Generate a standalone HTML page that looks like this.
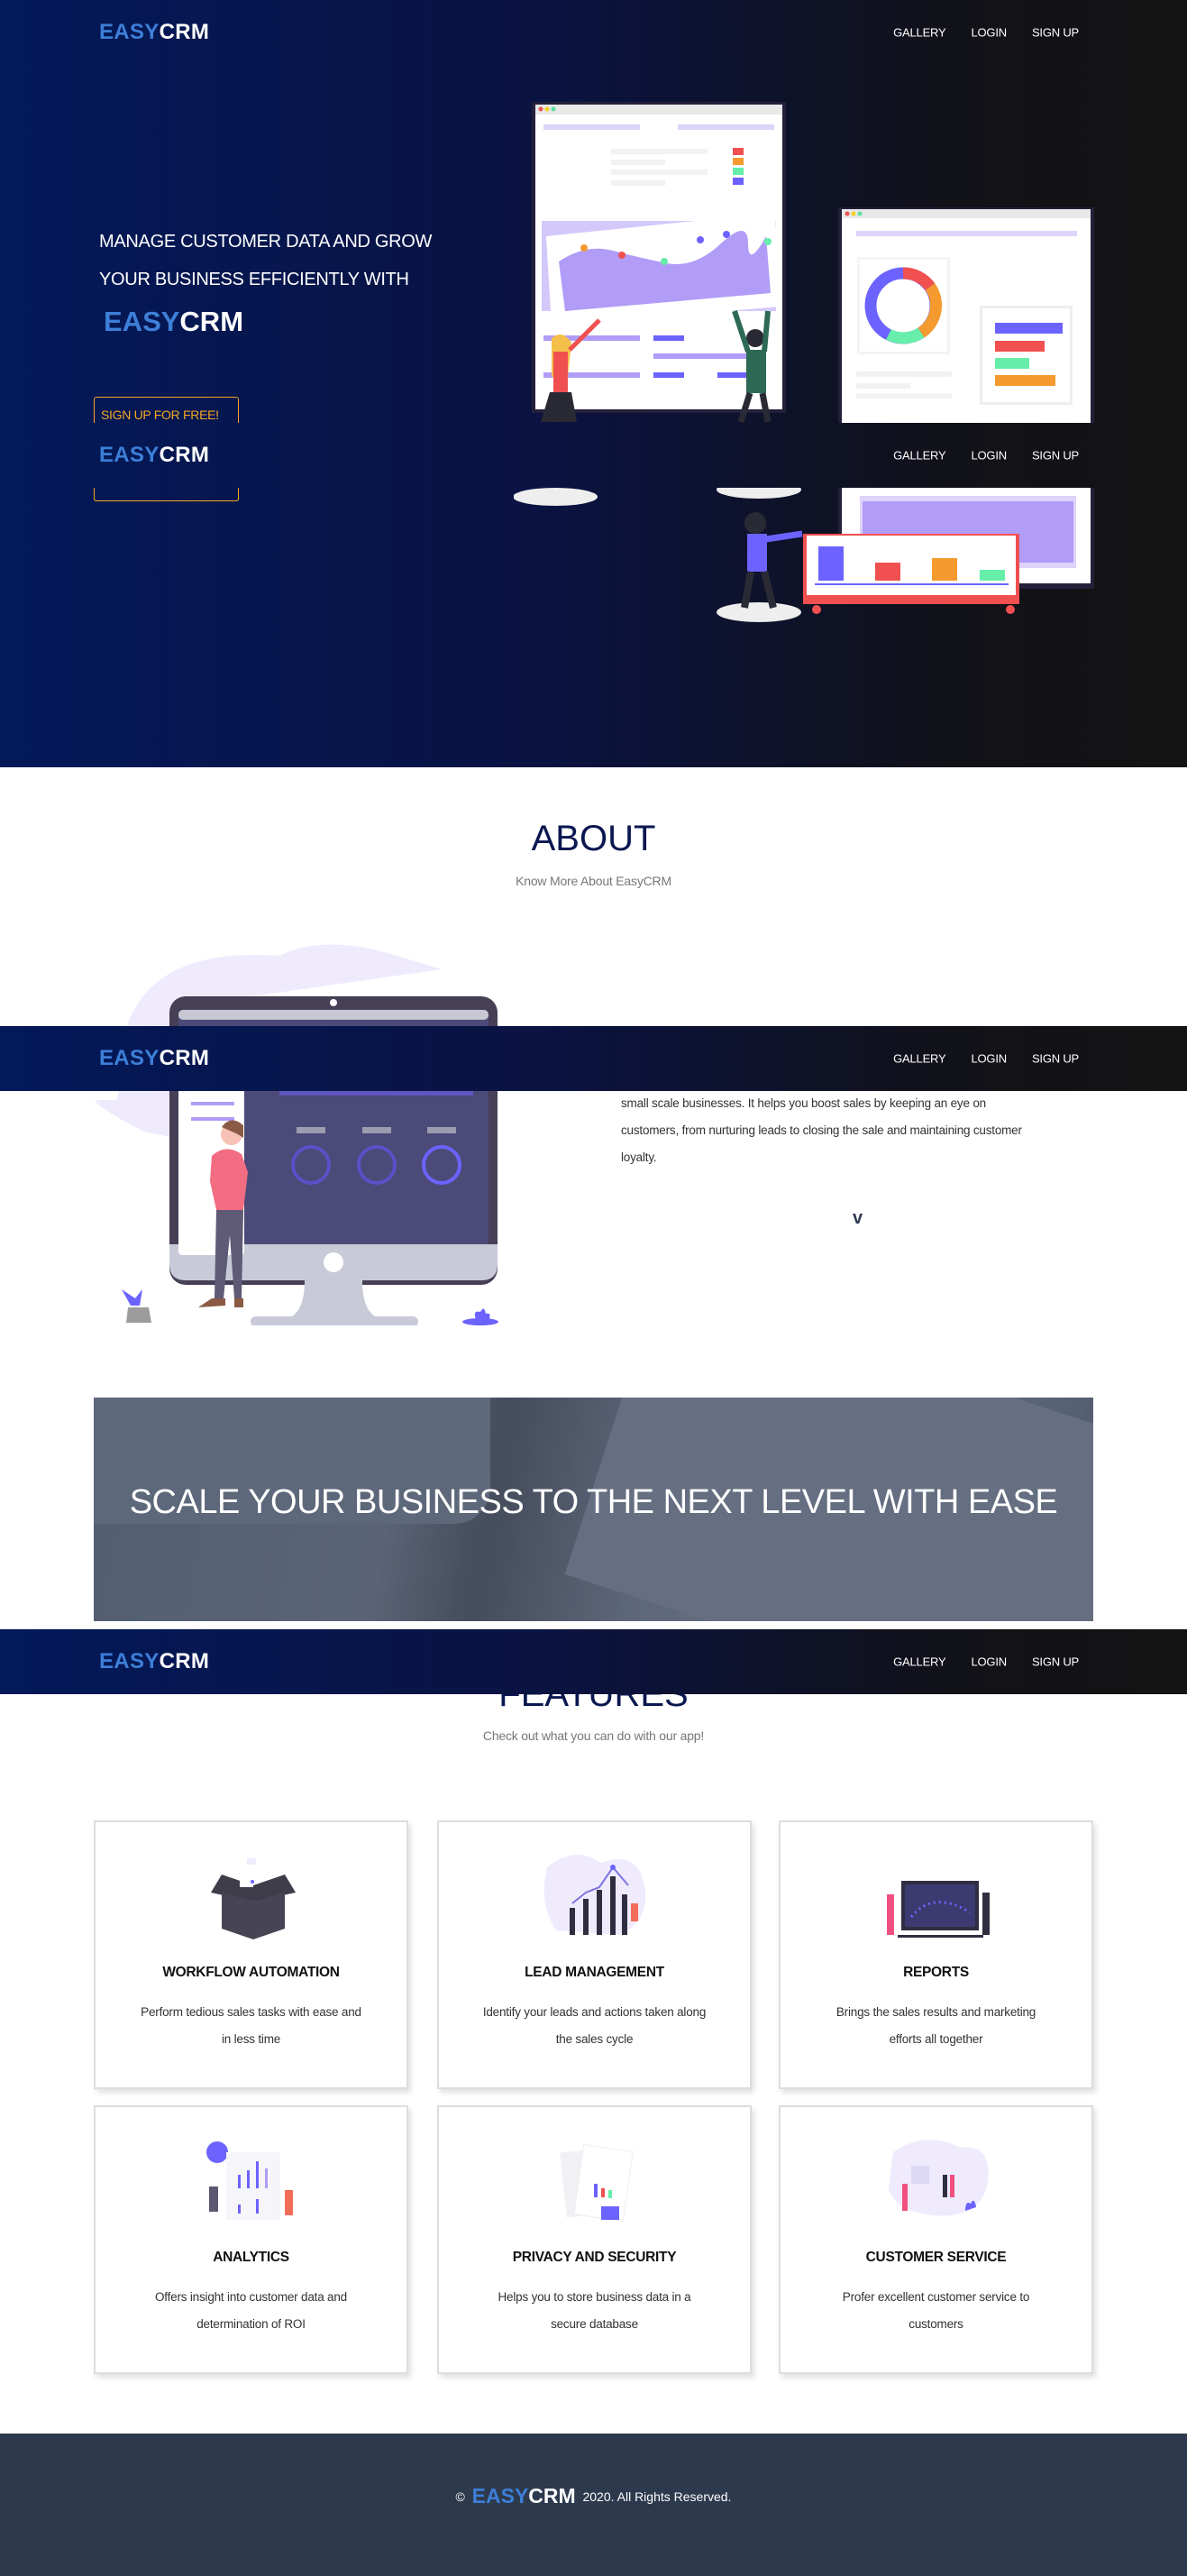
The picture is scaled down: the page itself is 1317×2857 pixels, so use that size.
<!DOCTYPE html>
<html><head><meta charset="utf-8">
<style>
*{margin:0;padding:0;box-sizing:border-box}
body{width:1317px;height:2857px;position:relative;background:#fff;font-family:"Liberation Sans",sans-serif;overflow:hidden}
.abs{position:absolute}
.grad{background:linear-gradient(to right,#03195a 0%,#0a1342 45%,#111118 80%,#141414 100%)}
.nav{position:absolute;left:0;width:1317px;height:72px}
.logo{position:absolute;left:110px;top:50%;transform:translateY(-50%);font-weight:bold;font-size:24px;color:#fff;letter-spacing:0.3px}
.logo b{color:#3d7fd8}
.links{position:absolute;right:120px;top:50%;transform:translateY(-50%);font-size:13px;color:#fff;display:flex;gap:28px;letter-spacing:-.2px}
.card{position:absolute;width:349px;height:298px;background:#fff;border:2px solid #ddd;box-shadow:3px 4px 6px rgba(0,0,0,.12);text-align:center}
.card h4{position:absolute;top:158px;width:100%;font-size:15.5px;color:#111;font-weight:bold;letter-spacing:-.3px}
.card p{position:absolute;top:196px;width:100%;font-size:13.5px;color:#333;line-height:30px;padding:0 48px;letter-spacing:-.2px}
.card svg{position:absolute;left:110px;top:30px}
</style></head><body>
<!-- HERO -->
<div class="abs grad" style="left:0;top:0;width:1317px;height:851px"></div>
<div class="nav" style="top:0"><div class="logo"><b>EASY</b>CRM</div><div class="links"><span>GALLERY</span><span>LOGIN</span><span>SIGN UP</span></div></div>
<div class="abs" style="left:110px;top:247px;color:#fff;font-size:20px;line-height:42px;letter-spacing:-.3px">MANAGE CUSTOMER DATA AND GROW<br>YOUR BUSINESS EFFICIENTLY WITH</div>
<div class="abs" style="left:115px;top:339px;font-size:31px;font-weight:bold;color:#fff"><span style="color:#3d7fd8">EASY</span>CRM</div>
<div class="abs" style="left:104px;top:440px;width:161px;height:116px;border:1px solid #f5a623;border-radius:3px"></div>
<div class="abs" style="left:112px;top:452px;color:#f5a623;font-size:14px;letter-spacing:-.3px">SIGN UP FOR FREE!</div>

<svg class="abs" style="left:570px;top:100px" width="660" height="590" viewBox="570 100 660 590">
<rect x="590" y="113" width="282" height="345" fill="#241f3a"/>
<rect x="594" y="116" width="274" height="338" fill="#fff"/>
<rect x="594" y="116" width="274" height="11" fill="#e8e8e8"/>
<circle cx="600" cy="121" r="2.5" fill="#f05050"/><circle cx="607" cy="121" r="2.5" fill="#f5d020"/><circle cx="614" cy="121" r="2.5" fill="#5ee0a0"/>
<rect x="603" y="138" width="107" height="6" fill="#ddd3fb"/><rect x="752" y="138" width="107" height="6" fill="#ddd3fb"/>
<rect x="678" y="165" width="107" height="6" fill="#f2f2f2"/><rect x="678" y="177" width="60" height="6" fill="#f2f2f2"/><rect x="678" y="188" width="107" height="6" fill="#f2f2f2"/><rect x="678" y="200" width="60" height="6" fill="#f2f2f2"/>
<rect x="813" y="164" width="12" height="8" fill="#f05050"/><rect x="813" y="175" width="12" height="8" fill="#f59a2e"/><rect x="813" y="186" width="12" height="8" fill="#66eeaa"/><rect x="813" y="197" width="12" height="8" fill="#6c63ff"/>
<rect x="601" y="245" width="260" height="100" fill="#d4c8fa"/>
<polygon points="606,262 860,236 865,340 612,362" fill="#fff"/>
<path d="M620 290 Q650 270 680 278 T740 292 T800 270 T830 270 T850 262 L855 325 L627 345 Z" fill="#b19cf7"/>
<circle cx="648" cy="275" r="4" fill="#f59a2e"/><circle cx="690" cy="283" r="4" fill="#f05050"/><circle cx="737" cy="290" r="4" fill="#66eeaa"/><circle cx="777" cy="266" r="4" fill="#6c63ff"/><circle cx="806" cy="260" r="4" fill="#6c63ff"/><circle cx="852" cy="268" r="4" fill="#66eeaa"/>
<rect x="603" y="372" width="107" height="6" fill="#b19cf7"/><rect x="725" y="372" width="34" height="6" fill="#6c63ff"/>
<rect x="725" y="392" width="107" height="6" fill="#b19cf7"/>
<rect x="603" y="413" width="107" height="6" fill="#b19cf7"/><rect x="725" y="413" width="34" height="6" fill="#6c63ff"/><rect x="796" y="413" width="34" height="6" fill="#6c63ff"/>
<path d="M612 375 q12 -10 22 5 l-4 38 l-18 0 z" fill="#f5c04a"/><rect x="614" y="390" width="16" height="45" fill="#f05050"/><polygon points="610,435 634,435 640,468 600,468" fill="#2a2a35"/>
<path d="M632 388 L665 355" stroke="#f05050" stroke-width="5"/>
<circle cx="838" cy="375" r="10" fill="#2a2a35"/><rect x="828" y="388" width="22" height="48" fill="#2d6a55"/><path d="M830 390 L815 345 M848 390 L852 345" stroke="#2d6a55" stroke-width="6"/><path d="M832 436 L822 468 M846 436 L852 468" stroke="#2a2a35" stroke-width="7"/>
<rect x="930" y="230" width="284" height="423" fill="#241f3a"/>
<rect x="934" y="232" width="276" height="415" fill="#fff"/>
<rect x="934" y="232" width="276" height="10" fill="#e8e8e8"/>
<circle cx="940" cy="237" r="2.5" fill="#f05050"/><circle cx="947" cy="237" r="2.5" fill="#f5d020"/><circle cx="954" cy="237" r="2.5" fill="#5ee0a0"/>
<rect x="950" y="256" width="245" height="6" fill="#ddd3fb"/>
<rect x="951" y="285" width="103" height="108" fill="#f4f4f4"/><rect x="954" y="288" width="97" height="102" fill="#fff"/>
<circle cx="1002" cy="339" r="36" fill="none" stroke="#6c63ff" stroke-width="13"/>
<path d="M1002 303 A36 36 0 0 1 1032 318" fill="none" stroke="#f05050" stroke-width="13"/>
<path d="M1032 318 A36 36 0 0 1 1022 369" fill="none" stroke="#f59a2e" stroke-width="13"/>
<path d="M1022 369 A36 36 0 0 1 986 371" fill="none" stroke="#66eeaa" stroke-width="13"/>
<rect x="1087" y="339" width="103" height="110" fill="#eee"/><rect x="1090" y="342" width="97" height="104" fill="#fff"/>
<rect x="1104" y="358" width="75" height="12" fill="#6c63ff"/><rect x="1104" y="378" width="55" height="12" fill="#f05050"/><rect x="1104" y="397" width="38" height="12" fill="#66eeaa"/><rect x="1104" y="416" width="67" height="12" fill="#f59a2e"/>
<rect x="950" y="412" width="106" height="6" fill="#f2f2f2"/><rect x="950" y="425" width="60" height="6" fill="#f2f2f2"/><rect x="950" y="436" width="106" height="6" fill="#f2f2f2"/>
<rect x="954" y="550" width="240" height="80" fill="#ddd3fb"/><rect x="957" y="556" width="234" height="68" fill="#b19cf7"/>
<ellipse cx="616" cy="551" rx="47" ry="10" fill="#eee"/><ellipse cx="842" cy="543" rx="47" ry="10" fill="#eee"/>
<ellipse cx="842" cy="679" rx="47" ry="11" fill="#eee"/>
<circle cx="838" cy="580" r="12" fill="#2a2a35"/><rect x="829" y="592" width="22" height="42" fill="#6c63ff"/><path d="M850 598 L890 592" stroke="#6c63ff" stroke-width="7"/><path d="M833 634 L826 674 M848 634 L858 674" stroke="#2a2a35" stroke-width="8"/>
<rect x="891" y="592" width="240" height="78" fill="#f05050"/><rect x="895" y="594" width="232" height="66" fill="#fff"/>
<rect x="908" y="606" width="28" height="38" fill="#6c63ff"/><rect x="971" y="624" width="28" height="20" fill="#f05050"/><rect x="1034" y="619" width="28" height="25" fill="#f59a2e"/><rect x="1087" y="632" width="28" height="12" fill="#66eeaa"/>
<rect x="904" y="647" width="215" height="2" fill="#6c63ff"/>
<circle cx="906" cy="676" r="5" fill="#f05050"/><circle cx="1121" cy="676" r="5" fill="#f05050"/>
</svg>
<div class="nav grad" style="top:469px"><div class="logo"><b>EASY</b>CRM</div><div class="links"><span>GALLERY</span><span>LOGIN</span><span>SIGN UP</span></div></div>
<div class="abs" style="left:104px;top:541px;width:161px;height:15px;border:1px solid #f5a623;border-top:none;border-radius:0 0 3px 3px"></div>

<!-- ABOUT -->
<div class="abs" style="left:0;top:908px;width:1317px;text-align:center;font-size:40px;color:#0a1650">ABOUT</div>
<div class="abs" style="left:0;top:969px;width:1317px;text-align:center;font-size:14px;color:#777;letter-spacing:-.2px">Know More About EasyCRM</div>
<svg class="abs" style="left:100px;top:1030px" width="560" height="440" viewBox="0 0 560 440">
<path d="M40 110 Q70 20 210 30 Q260 5 340 30 L390 45 L180 75 L420 80 Q455 120 440 170 Q400 250 250 265 L60 225 Q10 200 5 190 L30 190 Z" fill="#efebfd"/>
<rect x="88" y="75" width="364" height="320" rx="18" fill="#463f56"/>
<rect x="98" y="90" width="344" height="272" rx="6" fill="#4c4a78"/>
<rect x="98" y="90" width="344" height="11" rx="5" fill="#c8c8d4"/>
<circle cx="270" cy="82" r="4" fill="#fff"/>
<path d="M88 350 L452 350 L452 372 Q452 390 434 390 L106 390 Q88 390 88 372 Z" fill="#c8cad8"/>
<circle cx="270" cy="370" r="11" fill="#fff"/>
<path d="M238 390 L302 390 Q302 425 320 432 L220 432 Q238 425 238 390Z" fill="#c8cad8"/>
<rect x="178" y="430" width="186" height="12" rx="6" fill="#c8cad8"/>
<rect x="98" y="170" width="73" height="192" rx="4" fill="#fff"/>
<rect x="112" y="175" width="48" height="4" fill="#b19cf7"/><rect x="112" y="192" width="48" height="4" fill="#b19cf7"/><rect x="112" y="209" width="48" height="4" fill="#b19cf7"/>
<rect x="210" y="175" width="215" height="10" fill="#5f55c0"/>
<rect x="229" y="220" width="32" height="7" fill="#9c9cb0"/><rect x="302" y="220" width="32" height="7" fill="#9c9cb0"/><rect x="374" y="220" width="32" height="7" fill="#9c9cb0"/>
<circle cx="245" cy="262" r="20" fill="none" stroke="#5b50c8" stroke-width="4"/><circle cx="318" cy="262" r="20" fill="none" stroke="#5b50c8" stroke-width="4"/><circle cx="390" cy="262" r="20" fill="none" stroke="#6c63ff" stroke-width="4"/>
<circle cx="157" cy="228" r="12" fill="#f8c1b6"/><path d="M146 220 q10 -14 24 -2 l0 14 l-6 -4 z" fill="#8a5a44"/>
<path d="M135 252 Q150 238 168 250 L175 270 L170 312 L140 312 L133 280 Z" fill="#f26c82"/>
<path d="M140 312 L170 312 L168 410 L160 410 L155 340 L148 410 L138 410 Z" fill="#5f5a75"/>
<path d="M135 410 L150 410 L150 418 L120 420Z" fill="#8a5a44"/><path d="M160 410 L170 410 L170 420 L160 420Z" fill="#8a5a44"/>
<path d="M45 418 L35 400 L50 410 L58 400 L55 418Z" fill="#6c63ff"/><path d="M42 420 L65 420 L68 437 L40 437Z" fill="#9c9c9c"/>
<ellipse cx="433" cy="436" rx="20" ry="4" fill="#6c63ff"/><path d="M428 433 q-4 -10 5 -8 q4 -8 6 2 q6 -2 4 6z" fill="#6c63ff"/>
</svg>
<div class="nav grad" style="top:1138px"><div class="logo"><b>EASY</b>CRM</div><div class="links"><span>GALLERY</span><span>LOGIN</span><span>SIGN UP</span></div></div>
<div class="abs" style="left:689px;top:1209px;font-size:13.5px;color:#333;line-height:30px;width:470px;letter-spacing:-.2px">small scale businesses. It helps you boost sales by keeping an eye on customers, from nurturing leads to closing the sale and maintaining customer loyalty.</div>
<div class="abs" style="left:946px;top:1340px;font-size:20px;font-weight:bold;color:#2d3a4e">v</div>

<!-- BANNER -->
<div class="abs" style="left:104px;top:1550px;width:1109px;height:248px;background:linear-gradient(100deg,#5d6a7e 0%,#6a7688 30%,#444a58 40%,#6e7a8c 55%,#8591a2 75%,#59647a 100%);overflow:hidden">
<div class="abs" style="left:0;top:0;width:440px;height:140px;background:#6f7c8f;border-radius:0 0 40px 0"></div>
<div class="abs" style="left:560px;top:-40px;width:620px;height:340px;background:#7e899b;transform:rotate(18deg)"></div>
<div class="abs" style="left:0;top:0;width:1109px;height:248px;background:rgba(70,80,98,.45)"></div>
</div>
<div class="abs" style="left:104px;top:1645px;width:1109px;text-align:center;font-size:38px;color:#fff;letter-spacing:-.5px">SCALE YOUR BUSINESS TO THE NEXT LEVEL WITH EASE</div>

<!-- FEATURES -->
<div class="abs" style="left:0;top:1857px;width:1317px;text-align:center;font-size:40px;color:#0a1650">FEATURES</div>
<div class="nav grad" style="top:1807px"><div class="logo"><b>EASY</b>CRM</div><div class="links"><span>GALLERY</span><span>LOGIN</span><span>SIGN UP</span></div></div>
<div class="abs" style="left:0;top:1917px;width:1317px;text-align:center;font-size:14px;color:#777;letter-spacing:-.2px">Check out what you can do with our app!</div>

<div class="card" style="left:104px;top:2019px">
<svg width="130" height="105" viewBox="0 0 130 105"><polygon points="65,40 100,28 112,48 65,58 18,48 30,28" fill="#3f3d4a"/><polygon points="30,48 65,58 100,48 100,88 65,100 30,88" fill="#474555"/><rect x="50" y="30" width="15" height="12" fill="#fff"/><rect x="68" y="22" width="14" height="10" fill="#fff"/><rect x="58" y="10" width="10" height="7" fill="#eef"/><circle cx="64" cy="36" r="2" fill="#6c63ff"/></svg>
<h4>WORKFLOW AUTOMATION</h4><p>Perform tedious sales tasks with ease and in less time</p></div>
<div class="card" style="left:485px;top:2019px">
<svg width="130" height="105" viewBox="0 0 130 105"><path d="M10 20 Q40 -5 70 15 Q110 0 118 40 Q125 80 90 95 L20 90 Q0 60 10 20Z" fill="#efebfd"/><rect x="35" y="65" width="6" height="30" fill="#2f2e41"/><rect x="50" y="55" width="6" height="40" fill="#2f2e41"/><rect x="65" y="45" width="6" height="50" fill="#2f2e41"/><rect x="80" y="30" width="6" height="65" fill="#2f2e41"/><rect x="93" y="50" width="6" height="45" fill="#2f2e41"/><polyline points="38,60 53,48 68,42 83,20 100,40" stroke="#7d75e0" fill="none" stroke-width="2"/><circle cx="83" cy="20" r="3" fill="#6c63ff"/><rect x="103" y="60" width="8" height="20" fill="#f26c5a"/></svg>
<h4>LEAD MANAGEMENT</h4><p>Identify your leads and actions taken along the sales cycle</p></div>
<div class="card" style="left:864px;top:2019px">
<svg width="130" height="105" viewBox="0 0 130 105"><rect x="24" y="35" width="86" height="55" fill="#2f2e41"/><rect x="28" y="39" width="78" height="47" fill="#3c3a70"/><path d="M35 75 Q60 45 100 70" stroke="#6c63ff" fill="none" stroke-width="3" stroke-dasharray="2 4"/><rect x="8" y="50" width="8" height="45" fill="#f05080"/><rect x="114" y="48" width="8" height="47" fill="#2f2e41"/><rect x="20" y="95" width="95" height="3" fill="#2f2e41"/></svg>
<h4>REPORTS</h4><p>Brings the sales results and marketing efforts all together</p></div>
<div class="card" style="left:104px;top:2335px">
<svg width="130" height="105" viewBox="0 0 130 105"><circle cx="25" cy="20" r="12" fill="#6c63ff"/><rect x="35" y="20" width="60" height="75" fill="#f5f5fa"/><rect x="48" y="45" width="3" height="15" fill="#6c63ff"/><rect x="58" y="40" width="3" height="20" fill="#6c63ff"/><rect x="68" y="30" width="3" height="30" fill="#6c63ff"/><rect x="78" y="38" width="3" height="22" fill="#b19cf7"/><rect x="48" y="78" width="3" height="10" fill="#6c63ff"/><rect x="68" y="72" width="3" height="16" fill="#6c63ff"/><rect x="16" y="58" width="10" height="28" fill="#5a5870"/><rect x="100" y="62" width="9" height="28" fill="#f26c5a"/></svg>
<h4>ANALYTICS</h4><p>Offers insight into customer data and determination of ROI</p></div>
<div class="card" style="left:485px;top:2335px">
<svg width="130" height="105" viewBox="0 0 130 105"><rect x="28" y="18" width="50" height="72" fill="#f0f0f5" transform="rotate(-6 53 54)"/><rect x="45" y="15" width="55" height="78" fill="#fff" stroke="#eee" transform="rotate(8 72 54)"/><rect x="62" y="55" width="4" height="15" fill="#6c63ff"/><rect x="70" y="60" width="4" height="10" fill="#f05050"/><rect x="78" y="62" width="4" height="9" fill="#66eeaa"/><rect x="70" y="80" width="20" height="15" fill="#6c63ff"/></svg>
<h4>PRIVACY AND SECURITY</h4><p>Helps you to store business data in a secure database</p></div>
<div class="card" style="left:864px;top:2335px">
<svg width="130" height="105" viewBox="0 0 130 105"><path d="M15 20 Q50 -5 90 15 Q125 10 120 55 Q110 95 60 90 Q15 85 10 60Z" fill="#efebfd"/><rect x="35" y="35" width="20" height="20" fill="#ddd8f5"/><rect x="25" y="55" width="6" height="30" fill="#f05080"/><rect x="70" y="45" width="5" height="25" fill="#2f2e41"/><rect x="78" y="45" width="5" height="25" fill="#f05080"/><path d="M95 85 q0 -12 6 -8 q4 -8 6 4z" fill="#6c63ff"/></svg>
<h4>CUSTOMER SERVICE</h4><p>Profer excellent customer service to customers</p></div>

<!-- FOOTER -->
<div class="abs" style="left:0;top:2699px;width:1317px;height:158px;background:#2d3a4e"></div>
<div class="abs" style="left:0;top:2755px;width:1317px;text-align:center;color:#fff;font-size:14px">© &nbsp;<span style="font-size:23px;font-weight:bold;vertical-align:-2px"><span style="color:#3d7fd8">EASY</span>CRM</span>&nbsp; 2020. All Rights Reserved.</div>
</body></html>
